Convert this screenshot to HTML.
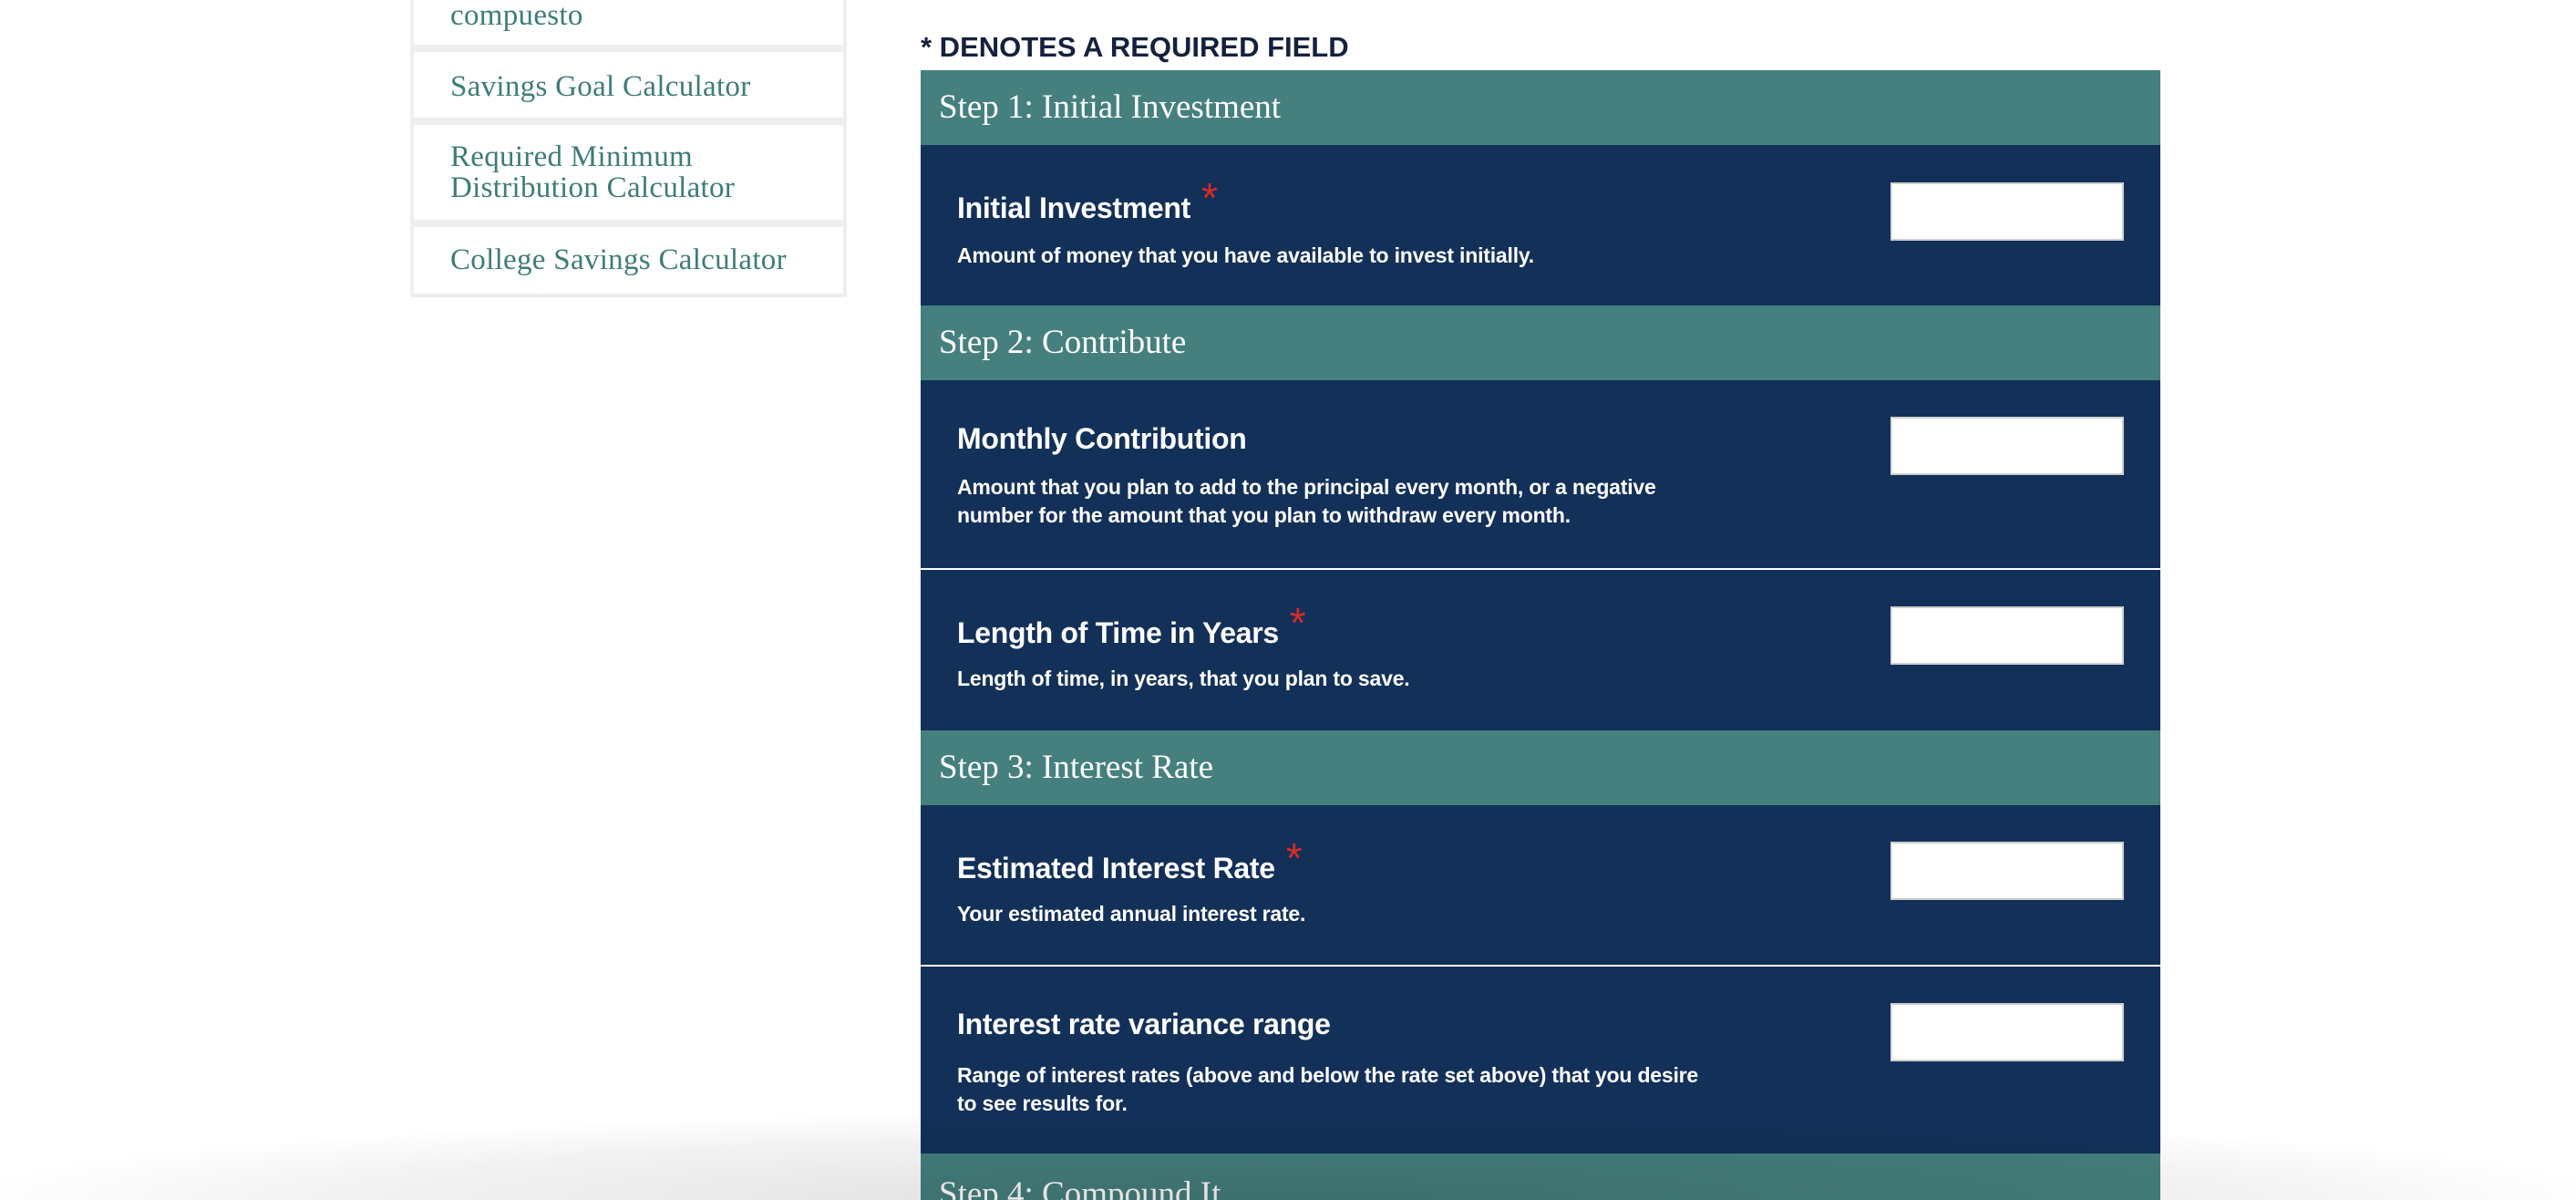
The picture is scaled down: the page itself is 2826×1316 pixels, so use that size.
<!DOCTYPE html>
<html><head><meta charset="utf-8"><style>
*{margin:0;padding:0;box-sizing:border-box}
html,body{width:2826px;height:1316px;overflow:hidden}
body{background:#fff;position:relative;font-family:"Liberation Sans",sans-serif}
#w{position:absolute;left:0;top:0;width:2826px;height:1316px;overflow:hidden}
.a{position:absolute}
.side{position:absolute;left:450px;width:479px;background:#fff;border:4px solid #eee;border-top:none}
.si{position:absolute;left:494px;font-family:"Liberation Serif",serif;font-size:33px;color:#3d7c78;line-height:34px;letter-spacing:0.3px}
.hd{position:absolute;left:1010px;width:1360px;background:#45807e;color:#fff;font-family:"Liberation Serif",serif;font-size:37px;padding-left:20px}
.bk{position:absolute;left:1010px;width:1360px;background:#133059}
.lb{position:absolute;left:40px;color:#fff;font-weight:bold;font-size:32px;line-height:40px;letter-spacing:-0.3px}
.lb span{color:#d52b24;font-size:46px;font-weight:normal;position:relative;top:-6px;margin-left:12px}
.ds{position:absolute;left:40px;color:#fff;font-weight:bold;font-size:23px;line-height:31px;letter-spacing:-0.2px}
.in{position:absolute;left:1064px;width:256px;height:64px;background:#fff;border:2px solid #ccc;border-left-color:#ddd;border-right-color:#ccc}
</style></head><body><div id="w">
<div class="side" style="top:0;height:53px"></div>
<div class="side" style="top:53px;height:80px;border-top:4px solid #eee"></div>
<div class="side" style="top:133px;height:112px;border-top:4px solid #eee"></div>
<div class="side" style="top:245px;height:81px;border-top:4px solid #eee"></div>
<div class="si" style="top:0px">compuesto</div>
<div class="si" style="top:78px">Savings Goal Calculator</div>
<div class="si" style="top:155px">Required Minimum<br>Distribution Calculator</div>
<div class="si" style="top:268px">College Savings Calculator</div>

<div class="a" style="left:1010px;top:34px;font-size:31px;font-weight:bold;color:#13213d">* DENOTES A REQUIRED FIELD</div>

<div class="hd" style="top:77px;height:82px;line-height:82px">Step 1: Initial Investment</div>
<div class="bk" style="top:159px;height:176px">
<div class="lb" style="top:44px">Initial Investment<span>*</span></div>
<div class="ds" style="top:106px">Amount of money that you have available to invest initially.</div>
<div class="in" style="top:41px"></div></div>

<div class="hd" style="top:335px;height:82px;line-height:82px">Step 2: Contribute</div>
<div class="bk" style="top:417px;height:206px">
<div class="lb" style="top:44px">Monthly Contribution</div>
<div class="ds" style="top:102px">Amount that you plan to add to the principal every month, or a negative<br>number for the amount that you plan to withdraw every month.</div>
<div class="in" style="top:40px"></div></div>
<div class="bk" style="top:625px;height:176px">
<div class="lb" style="top:44px">Length of Time in Years<span>*</span></div>
<div class="ds" style="top:104px">Length of time, in years, that you plan to save.</div>
<div class="in" style="top:40px"></div></div>

<div class="hd" style="top:801px;height:82px;line-height:82px">Step 3: Interest Rate</div>
<div class="bk" style="top:883px;height:175px">
<div class="lb" style="top:44px">Estimated Interest Rate<span>*</span></div>
<div class="ds" style="top:104px">Your estimated annual interest rate.</div>
<div class="in" style="top:40px"></div></div>
<div class="bk" style="top:1060px;height:205px">
<div class="lb" style="top:43px">Interest rate variance range</div>
<div class="ds" style="top:104px">Range of interest rates (above and below the rate set above) that you desire<br>to see results for.</div>
<div class="in" style="top:40px"></div></div>

<div class="hd" style="top:1265px;height:51px;line-height:90px;overflow:hidden">Step 4: Compound It</div>

<div class="a" style="left:0;width:2826px;top:1216px;height:100px;background:radial-gradient(ellipse 52% 100% at 50% 100%, rgba(0,0,0,0.13), rgba(0,0,0,0.05) 70%, rgba(0,0,0,0) 100%)"></div>
</div></body></html>
